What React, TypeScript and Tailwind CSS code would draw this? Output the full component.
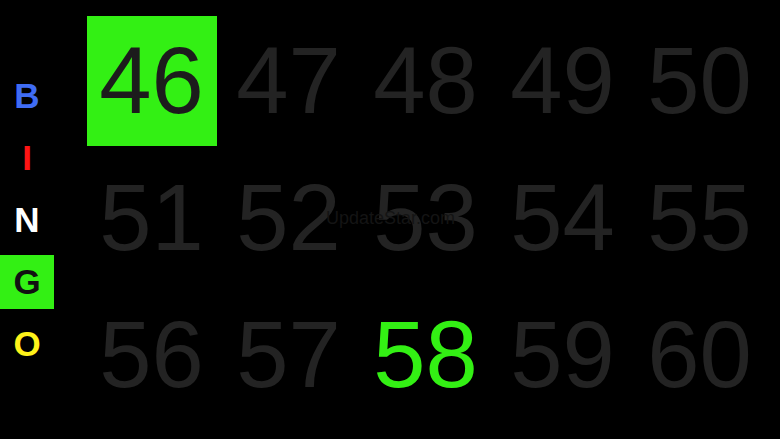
import React from "react";

const letters = [
  { ch: "B", className: "text-[#3f6cf4]" },
  { ch: "I", className: "text-[#ff1414]" },
  { ch: "N", className: "text-white" },
  { ch: "G", className: "text-[#111111] bg-[#33f014]" },
  { ch: "O", className: "text-[#fff21a]" },
];

const numbers = Array.from({ length: 15 }, (_, i) => 46 + i);

export default function App() {
  return (
    <div
      className="relative w-[780px] h-[439px] bg-black overflow-hidden flex items-center"
      style={{ fontFamily: '"Liberation Sans", Arial, sans-serif' }}
    >
      {/* letter column */}
      <div className="w-[54px] flex flex-col">
        {letters.map((l) => (
          <div key={l.ch} className="h-[62px] flex items-center justify-center">
            <div
              className={`w-[54px] h-[54px] flex items-center justify-center text-[35px] font-bold leading-none ${l.className}`}
            >
              {l.ch}
            </div>
          </div>
        ))}
      </div>

      {/* number board */}
      <div className="ml-[29px] mb-[4px] grid grid-cols-[repeat(5,137px)] grid-rows-[repeat(3,137px)]">
        {numbers.map((n) => {
          const called = n === 46;
          const latest = n === 58;
          return (
            <div key={n} className="flex items-center justify-center">
              <div
                className={`w-[130px] h-[130px] flex items-center justify-center text-[94px] leading-none ${
                  called
                    ? "bg-[#33f014] text-[#1c1c1c]"
                    : latest
                    ? "text-[#33f014]"
                    : "text-[#232323]"
                }`}
              >
                {n}
              </div>
            </div>
          );
        })}
      </div>

      {/* watermark */}
      <div className="absolute left-[326px] top-[209px] text-[18px] leading-none text-[#141414]">
        UpdateStar.com
      </div>
    </div>
  );
}
